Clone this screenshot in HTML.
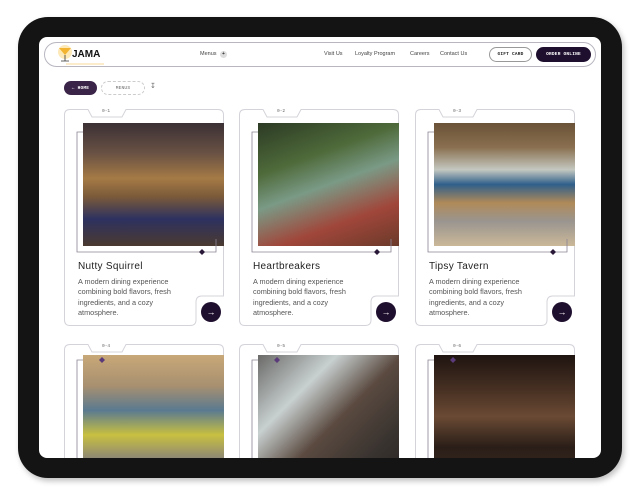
<!DOCTYPE html>
<html><head><meta charset="utf-8"><style>
*{margin:0;padding:0;box-sizing:border-box}
body{width:641px;height:500px;background:#fff;position:relative;overflow:hidden;font-family:"Liberation Sans",sans-serif}
.bezel{position:absolute;left:18px;top:17px;width:604px;height:461px;background:#141414;border-radius:30px;box-shadow:2px 3px 6px rgba(0,0,0,.25)}
.screen{position:absolute;left:39px;top:37px;width:562px;height:421px;background:#fff;border-radius:8px;overflow:hidden}
.abs{position:absolute}
.nav{left:5px;top:5px;width:552px;height:25px;border:1px solid #b9b6c0;border-radius:13px}
.navt{font-size:5.5px;color:#444}
.btn{border-radius:8px;font-family:"Liberation Mono",monospace;font-size:4.5px;font-weight:bold;display:flex;align-items:center;justify-content:center;letter-spacing:.2px}
.card{position:absolute;width:160px;height:217px;overflow:hidden}
.card svg{position:absolute;left:0;top:0}
.img{position:absolute;left:19px;top:14px;width:141px;height:123px}
.lab{position:absolute;left:38px;top:0px;font-family:"Liberation Mono",monospace;font-size:4.5px;color:#666}
.ttl{position:absolute;left:14px;top:152px;font-size:10px;color:#222;letter-spacing:.3px}
.dsc{position:absolute;left:14px;top:168px;width:114px;font-size:7.3px;line-height:10.4px;color:#555}
.go{position:absolute;left:137px;top:193px;width:20px;height:20px;border-radius:50%;background:#1f0f2e;color:#fff;font-size:9px;display:flex;align-items:center;justify-content:center}
</style></head><body>
<div class="bezel"></div>
<div class="screen">
 <div class="abs nav"></div>
 <svg class="abs" style="left:17px;top:7px" width="50" height="22">
  <circle cx="9" cy="8" r="7" fill="#fde9b8"/>
  <path d="M3 4 L15 4 L9 11 Z" fill="#f2b431"/>
  <line x1="9" y1="11" x2="9" y2="17" stroke="#333" stroke-width=".8"/>
  <line x1="5" y1="17" x2="13" y2="17" stroke="#333" stroke-width=".8"/>
  <text x="16" y="13" font-family="Liberation Sans" font-weight="bold" font-size="10" fill="#111">JAMA</text>
  <line x1="10" y1="20" x2="48" y2="20" stroke="#f2b431" stroke-width=".6"/>
 </svg>
 <div class="abs navt" style="left:161px;top:14px">Menus</div>
 <div class="abs" style="left:181px;top:14px;width:7px;height:7px;border-radius:50%;background:#ddd;font-size:5px;text-align:center;line-height:7px">+</div>
 <div class="abs navt" style="left:285px;top:14px">Visit Us</div>
 <div class="abs navt" style="left:316px;top:14px">Loyalty Program</div>
 <div class="abs navt" style="left:371px;top:14px">Careers</div>
 <div class="abs navt" style="left:401px;top:14px">Contact Us</div>
 <div class="abs btn" style="left:450px;top:10px;width:43px;height:15px;border:1px solid #999;color:#222">GIFT CARD</div>
 <div class="abs btn" style="left:497px;top:10px;width:55px;height:15px;background:#1f0f2e;color:#fff">ORDER ONLINE</div>
 <div class="abs btn" style="left:25px;top:44px;width:33px;height:14px;background:#3a2448;color:#fff">&larr; HOME</div>
 <div class="abs btn" style="left:62px;top:44px;width:44px;height:14px;border:1px dashed #ccc;color:#666;font-weight:normal">MENUS</div>
 <div class="abs" style="left:111px;top:45px;font-size:7px;color:#666">&#8615;</div>
</div>

<div class="card" style="left:64px;top:109px">
 <svg width="160" height="217"><path d="M6,0.5 H24 L28,8 H58 L62,0.5 H154 Q159.5,0.5 159.5,6 V187 H138 Q132,187 132,193 V211 Q132,216.5 126,216.5 H6 Q0.5,216.5 0.5,211 V6 Q0.5,0.5 6,0.5 Z" fill="none" stroke="#d5d3da" stroke-width="1"/></svg>
 <div class="lab">0-1</div>
 <div class="img" style="background:linear-gradient(180deg,#3b3035 0%,#6a5244 25%,#a57a45 45%,#7a5a3a 60%,#2d3160 78%,#4a3a30 100%)"></div>
 <svg width="160" height="217"><path d="M19,23 H13 V143 H152 V130" fill="none" stroke="#8a8494" stroke-width=".8"/><path d="M135,143 l3,-3 l3,3 l-3,3z" fill="#2a1838"/></svg>
 <div class="ttl">Nutty Squirrel</div>
 <div class="dsc">A modern dining experience combining bold flavors, fresh ingredients, and a cozy atmosphere.</div>
 <div class="go">&rarr;</div>
</div>
<div class="card" style="left:239px;top:109px">
 <svg width="160" height="217"><path d="M6,0.5 H24 L28,8 H58 L62,0.5 H154 Q159.5,0.5 159.5,6 V187 H138 Q132,187 132,193 V211 Q132,216.5 126,216.5 H6 Q0.5,216.5 0.5,211 V6 Q0.5,0.5 6,0.5 Z" fill="none" stroke="#d5d3da" stroke-width="1"/></svg>
 <div class="lab">0-2</div>
 <div class="img" style="background:linear-gradient(160deg,#2c3a24 0%,#4e6a3a 30%,#7a9a86 50%,#a0463a 75%,#6a3a2a 100%)"></div>
 <svg width="160" height="217"><path d="M19,23 H13 V143 H152 V130" fill="none" stroke="#8a8494" stroke-width=".8"/><path d="M135,143 l3,-3 l3,3 l-3,3z" fill="#2a1838"/></svg>
 <div class="ttl">Heartbreakers</div>
 <div class="dsc">A modern dining experience combining bold flavors, fresh ingredients, and a cozy atmosphere.</div>
 <div class="go">&rarr;</div>
</div>
<div class="card" style="left:415px;top:109px">
 <svg width="160" height="217"><path d="M6,0.5 H24 L28,8 H58 L62,0.5 H154 Q159.5,0.5 159.5,6 V187 H138 Q132,187 132,193 V211 Q132,216.5 126,216.5 H6 Q0.5,216.5 0.5,211 V6 Q0.5,0.5 6,0.5 Z" fill="none" stroke="#d5d3da" stroke-width="1"/></svg>
 <div class="lab">0-3</div>
 <div class="img" style="background:linear-gradient(180deg,#6a5238 0%,#8a7050 20%,#c4c8c0 38%,#2f5f8a 50%,#b08a58 65%,#9a9590 80%,#cbb898 100%)"></div>
 <svg width="160" height="217"><path d="M19,23 H13 V143 H152 V130" fill="none" stroke="#8a8494" stroke-width=".8"/><path d="M135,143 l3,-3 l3,3 l-3,3z" fill="#2a1838"/></svg>
 <div class="ttl">Tipsy Tavern</div>
 <div class="dsc">A modern dining experience combining bold flavors, fresh ingredients, and a cozy atmosphere.</div>
 <div class="go">&rarr;</div>
</div>

<div class="card" style="left:64px;top:344px;height:114px">
 <svg width="160" height="114"><path d="M0.5,114 V6 Q0.5,0.5 6,0.5 H24 L28,8 H58 L62,0.5 H154 Q159.5,0.5 159.5,6 V114" fill="none" stroke="#d5d3da" stroke-width="1"/></svg>
 <div class="lab">0-4</div>
 <div class="img" style="top:11px;background:linear-gradient(180deg,#c8a878 0%,#a89070 25%,#5a7a90 45%,#c8c040 65%,#8a8478 85%,#6a6458 100%)"></div>
 <svg width="160" height="114"><path d="M19,16 H13 V114" fill="none" stroke="#8a8494" stroke-width=".8"/><path d="M35,16 l3,-3 l3,3 l-3,3z" fill="#5a3a78"/></svg>
</div>
<div class="card" style="left:239px;top:344px;height:114px">
 <svg width="160" height="114"><path d="M0.5,114 V6 Q0.5,0.5 6,0.5 H24 L28,8 H58 L62,0.5 H154 Q159.5,0.5 159.5,6 V114" fill="none" stroke="#d5d3da" stroke-width="1"/></svg>
 <div class="lab">0-5</div>
 <div class="img" style="top:11px;background:linear-gradient(135deg,#6a6a68 0%,#c8d0d0 30%,#5a4a40 55%,#3a3430 80%,#2a2624 100%)"></div>
 <svg width="160" height="114"><path d="M19,16 H13 V114" fill="none" stroke="#8a8494" stroke-width=".8"/><path d="M35,16 l3,-3 l3,3 l-3,3z" fill="#5a3a78"/></svg>
</div>
<div class="card" style="left:415px;top:344px;height:114px">
 <svg width="160" height="114"><path d="M0.5,114 V6 Q0.5,0.5 6,0.5 H24 L28,8 H58 L62,0.5 H154 Q159.5,0.5 159.5,6 V114" fill="none" stroke="#d5d3da" stroke-width="1"/></svg>
 <div class="lab">0-6</div>
 <div class="img" style="top:11px;background:linear-gradient(180deg,#1e1410 0%,#4a3224 30%,#6a4a34 50%,#2a1e18 75%,#3a2a20 100%)"></div>
 <svg width="160" height="114"><path d="M19,16 H13 V114" fill="none" stroke="#8a8494" stroke-width=".8"/><path d="M35,16 l3,-3 l3,3 l-3,3z" fill="#5a3a78"/></svg>
</div>
</body></html>
